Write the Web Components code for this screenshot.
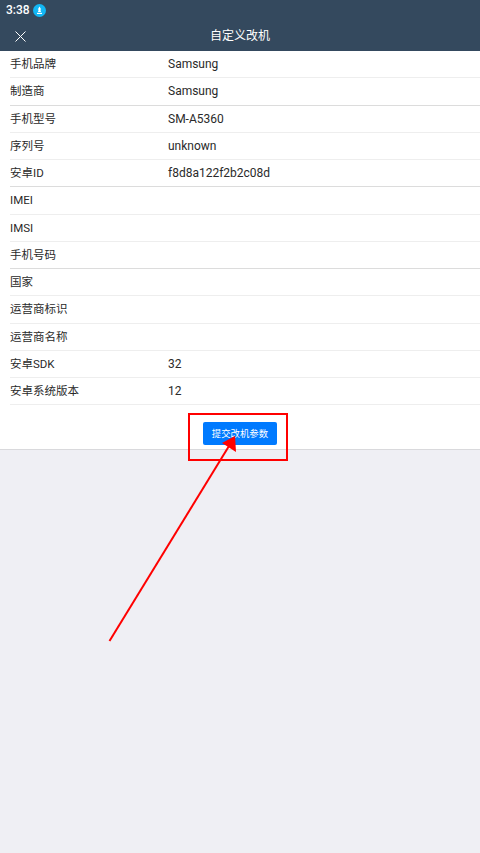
<!DOCTYPE html>
<html>
<head>
<meta charset="utf-8">
<style>
  html, body { margin: 0; height: 100%; }
  body { background: #efeff4; font-family: Roboto, "Noto Sans CJK SC", sans-serif; }
</style>
</head>
<body>
<app-screen>
  <status-bar time="3:38"></status-bar>
  <title-bar title="自定义改机"></title-bar>
  <param-form>
    <param-row label="手机品牌" value="Samsung"></param-row>
    <param-row label="制造商" value="Samsung" strong></param-row>
    <param-row label="手机型号" value="SM-A5360"></param-row>
    <param-row label="序列号" value="unknown"></param-row>
    <param-row label="安卓ID" value="f8d8a122f2b2c08d" strong></param-row>
    <param-row label="IMEI"></param-row>
    <param-row label="IMSI"></param-row>
    <param-row label="手机号码" strong></param-row>
    <param-row label="国家"></param-row>
    <param-row label="运营商标识"></param-row>
    <param-row label="运营商名称"></param-row>
    <param-row label="安卓SDK" value="32"></param-row>
    <param-row label="安卓系统版本" value="12"></param-row>
    <submit-button slot="action">提交改机参数</submit-button>
  </param-form>
  <arrow-note></arrow-note>
</app-screen>
<script>
class AppScreen extends HTMLElement {
  constructor() {
    super();
    this.attachShadow({ mode: "open" });
    this.shadowRoot.innerHTML = `
    <style>
      :host { display: flex; flex-direction: column; position: relative; width: 480px; height: 853px; overflow: hidden; background: #efeff4; }
    </style>
    <slot></slot>`;
  }
}

class StatusBar extends HTMLElement {
  constructor() {
    super();
    this.attachShadow({ mode: "open" });
    this.shadowRoot.innerHTML = `
    <style>
      :host { display: flex; align-items: center; gap: 3px; height: 20px; padding-left: 6px; background: #34495e; color: #fff; font-size: 12px; font-weight: 500; }
      svg { display: block; }
    </style>
    <span>${this.getAttribute("time")}</span>
    <svg width="13" height="13" viewBox="0 0 13 13">
      <circle cx="6.5" cy="6.5" r="6.5" fill="#12b7f5"/>
      <path d="M6.5 2.5 L8.2 5.5 L7.3 5.5 L8 8 L5 8 L5.7 5.5 L4.8 5.5 Z" fill="#fff"/>
      <rect x="4" y="8.8" width="5" height="1.2" fill="#fff"/>
    </svg>`;
  }
}

class TitleBar extends HTMLElement {
  constructor() {
    super();
    this.attachShadow({ mode: "open" });
    this.shadowRoot.innerHTML = `
    <style>
      :host { display: flex; align-items: center; justify-content: center; position: relative; height: 31px; background: #34495e; color: #fff; font-size: 12px; }
      span { position: relative; top: -1px; }
      svg { position: absolute; left: 15px; top: 11px; }
    </style>
    <svg width="11" height="11" viewBox="0 0 11 11"><path d="M0.5 0.5 L10.5 10.5 M10.5 0.5 L0.5 10.5" stroke="#fff" stroke-width="1" fill="none"/></svg>
    <span>${this.getAttribute("title")}</span>`;
  }
}

class ParamForm extends HTMLElement {
  constructor() {
    super();
    this.attachShadow({ mode: "open" });
    this.shadowRoot.innerHTML = `
    <style>
      :host { display: block; background: #fff; border-bottom: 1px solid #d9d9dc; }
      .rows { display: block; }
      .action { display: flex; justify-content: center; padding: 17px 0 4px; }
    </style>
    <div class="rows"><slot></slot></div>
    <div class="action"><slot name="action"></slot></div>`;
  }
}

class ParamRow extends HTMLElement {
  constructor() {
    super();
    this.attachShadow({ mode: "open" });
    const value = this.getAttribute("value") || "";
    this.shadowRoot.innerHTML = `
    <style>
      :host { display: block; box-sizing: border-box; height: 27.25px; margin-left: 10px; color: #2a2a2a; border-bottom: 1px solid #eeeeee; }
      :host([strong]) { border-bottom-color: #dcdcdc; }
      .row { display: grid; grid-template-columns: 158px 1fr; align-items: center; height: 100%; }
      .label { font-size: 11.5px; line-height: 24px; }
      .value { font-size: 12px; line-height: 24px; }
    </style>
    <div class="row"><span class="label">${this.getAttribute("label")}</span><span class="value">${value}</span></div>`;
  }
}

class SubmitButton extends HTMLElement {
  constructor() {
    super();
    this.attachShadow({ mode: "open" });
    this.shadowRoot.innerHTML = `
    <style>
      :host { display: flex; align-items: center; justify-content: center; width: 74px; height: 23px; border-radius: 2px; background: #007aff; color: #fff; font-size: 9.4px; }
      span { position: relative; top: -1px; }
    </style>
    <span><slot></slot></span>`;
  }
}

// red marks drawn over the screenshot
class ArrowNote extends HTMLElement {
  constructor() {
    super();
    this.attachShadow({ mode: "open" });
    this.shadowRoot.innerHTML = `
    <style>
      :host { position: absolute; left: 0; top: 0; width: 480px; height: 853px; pointer-events: none; }
    </style>
    <svg width="480" height="853" viewBox="0 0 480 853">
      <rect x="189" y="414" width="98" height="46" fill="none" stroke="#f00" stroke-width="2"/>
      <path d="M109.5 641 L229 446" stroke="#f00" stroke-width="2" fill="none"/>
      <path d="M235 436 L236 452 L222 443 Z" fill="#f00"/>
    </svg>`;
  }
}

customElements.define("app-screen", AppScreen);
customElements.define("status-bar", StatusBar);
customElements.define("title-bar", TitleBar);
customElements.define("param-form", ParamForm);
customElements.define("param-row", ParamRow);
customElements.define("submit-button", SubmitButton);
customElements.define("arrow-note", ArrowNote);
</script>
</body>
</html>
